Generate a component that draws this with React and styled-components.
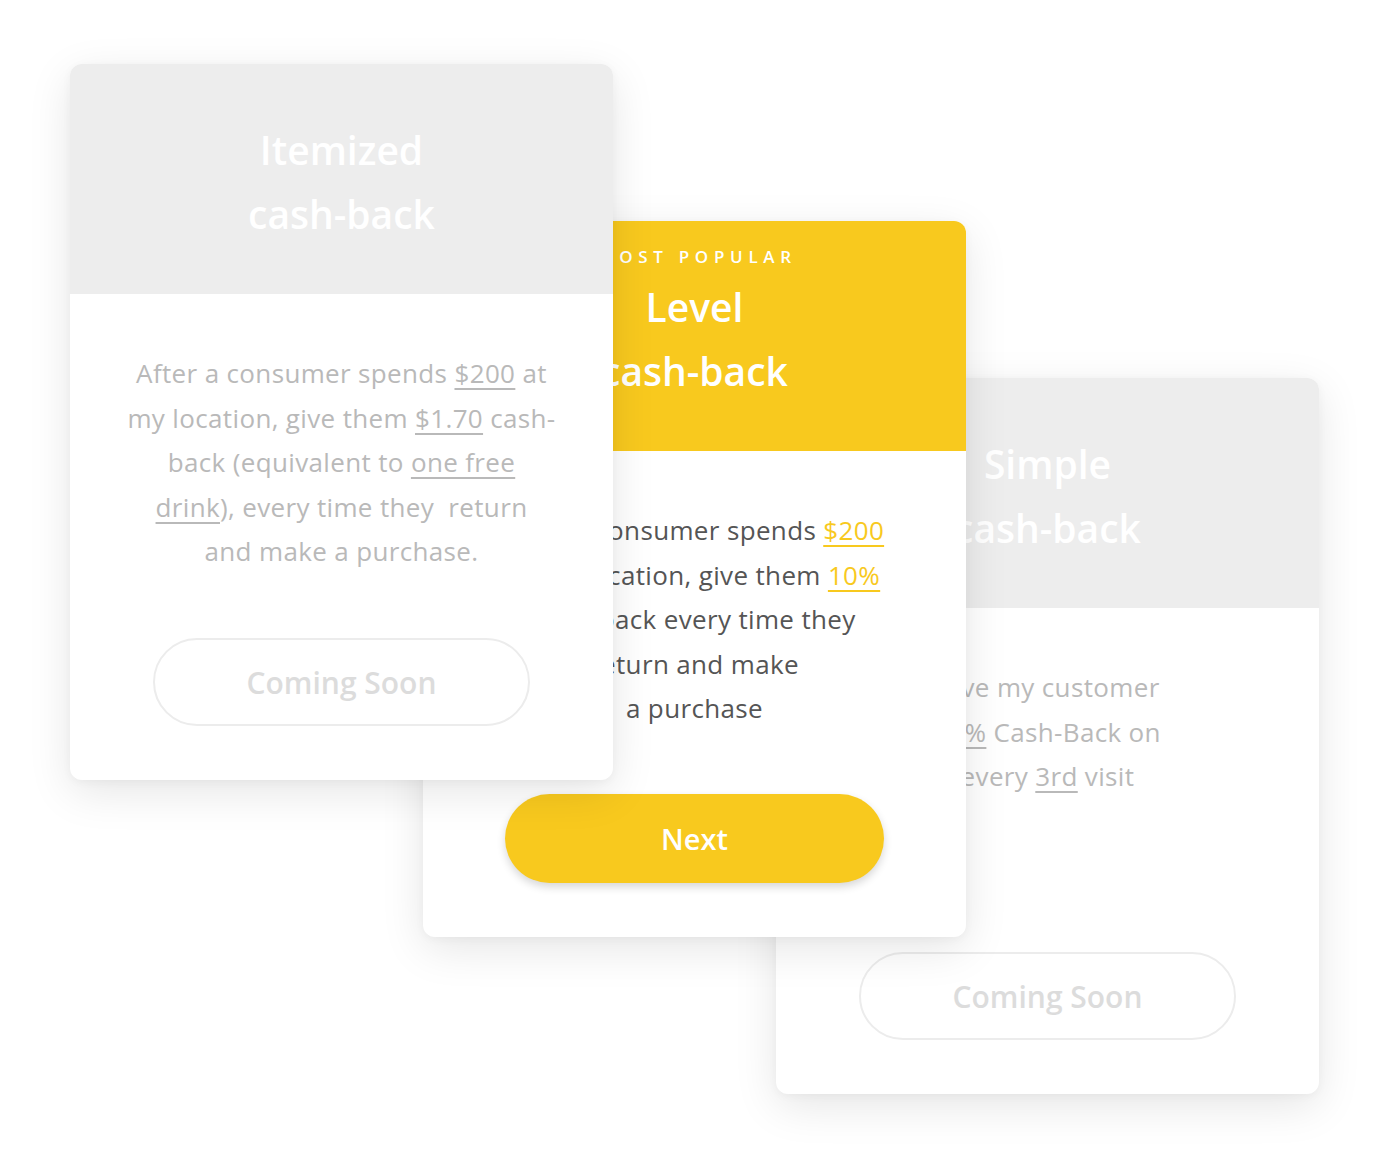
import React from "react";
import styled, { createGlobalStyle } from "styled-components";

const GlobalStyle = createGlobalStyle`
  html, body {
    margin: 0;
    padding: 0;
    background: #ffffff;
  }
  body {
    width: 1390px;
    height: 1170px;
    overflow: hidden;
    font-family: "Open Sans", "Lato", sans-serif;
  }
`;

const getPlans = () => [
  {
    label: "",
    title: ["Itemized", "cash-back"],
    active: false,
    lines: [
      <>After a consumer spends <Link>$200</Link> at</>,
      <>my location, give them <Link>$1.70</Link> cash-</>,
      <>back (equivalent to <Link>one free</Link></>,
      <><Link>drink</Link>), every time they&nbsp; return</>,
      <>and make a purchase.</>,
    ],
    button: "Coming Soon",
  },
  {
    label: "MOST POPULAR",
    title: ["Level", "cash-back"],
    active: true,
    lines: [
      <>After a consumer spends <Link $active>$200</Link></>,
      <>at my location, give them <Link $active>10%</Link></>,
      <>cash-back every time they</>,
      <>return and make</>,
      <>a purchase</>,
    ],
    button: "Next",
  },
  {
    label: "",
    title: ["Simple", "cash-back"],
    active: false,
    lines: [
      <>Give my customer</>,
      <><Link>10%</Link> Cash-Back on</>,
      <>every <Link>3rd</Link> visit</>,
    ],
    button: "Coming Soon",
  },
];

const App = () => {
  const plans = getPlans();
  return (
    <>
      <GlobalStyle />
      <Stage>
        {plans.map((plan, i) => (
          <Card key={i} $offset={i * 157} $layer={3 - i}>
            <Header $active={plan.active}>
              <Label>{plan.label || "\u00a0"}</Label>
              <Title>
                {plan.title[0]}
                <br />
                {plan.title[1]}
              </Title>
            </Header>
            <Body>
              <Text $active={plan.active}>
                {plan.lines.map((line, j) => (
                  <Line key={j}>{line}</Line>
                ))}
              </Text>
              {plan.active ? (
                <NextButton>{plan.button}</NextButton>
              ) : (
                <SoonButton>{plan.button}</SoonButton>
              )}
            </Body>
          </Card>
        ))}
      </Stage>
    </>
  );
};

const Stage = styled.div`
  display: flex;
  align-items: flex-start;
  padding: 64px 0 0 70px;
`;

const Card = styled.div`
  position: relative;
  z-index: ${(p) => p.$layer};
  flex: 0 0 543px;
  width: 543px;
  height: 716px;
  margin-top: ${(p) => p.$offset}px;
  margin-left: -190px;
  &:first-child {
    margin-left: 0;
  }
  display: flex;
  flex-direction: column;
  background: #ffffff;
  border-radius: 12px;
  overflow: hidden;
  box-shadow: 0 12px 44px rgba(0, 0, 0, 0.1), 0 2px 10px rgba(0, 0, 0, 0.04);
`;

const Header = styled.div`
  height: 230px;
  box-sizing: border-box;
  padding-top: 26px;
  background: ${(p) => (p.$active ? "#f8c91e" : "#ededed")};
  display: flex;
  flex-direction: column;
  align-items: center;
  color: #ffffff;
`;

const Label = styled.div`
  height: 20px;
  line-height: 20px;
  font-size: 17px;
  font-weight: 600;
  letter-spacing: 5.7px;
  padding-left: 5.7px;
`;

const Title = styled.div`
  margin-top: 8px;
  font-size: 39px;
  line-height: 64px;
  font-weight: 600;
  text-align: center;
`;

const Body = styled.div`
  flex: 1;
  display: flex;
  flex-direction: column;
  align-items: center;
  justify-content: space-between;
  padding: 57px 0 54px;
`;

const Text = styled.div`
  font-size: 26px;
  font-weight: 500;
  letter-spacing: 0.35px;
  line-height: 44.5px;
  text-align: center;
  color: ${(p) => (p.$active ? "#555555" : "#b9b9b9")};
`;

const Line = styled.div`
  white-space: nowrap;
`;

const Link = styled.span`
  text-decoration: underline;
  text-underline-offset: 5px;
  text-decoration-thickness: 1.5px;
  color: ${(p) => (p.$active ? "#f8c91e" : "inherit")};
`;

const SoonButton = styled.div`
  width: 377px;
  height: 88px;
  box-sizing: border-box;
  border: 2px solid #ececec;
  border-radius: 44px;
  display: flex;
  align-items: center;
  justify-content: center;
  font-size: 30px;
  font-weight: 600;
  color: #dcdcdc;
`;

const NextButton = styled.div`
  width: 379px;
  height: 89px;
  border-radius: 45px;
  background: #f8c91e;
  box-shadow: 0 4px 8px rgba(0, 0, 0, 0.16);
  display: flex;
  align-items: center;
  justify-content: center;
  font-size: 29px;
  font-weight: 600;
  color: #ffffff;
`;

export default App;
